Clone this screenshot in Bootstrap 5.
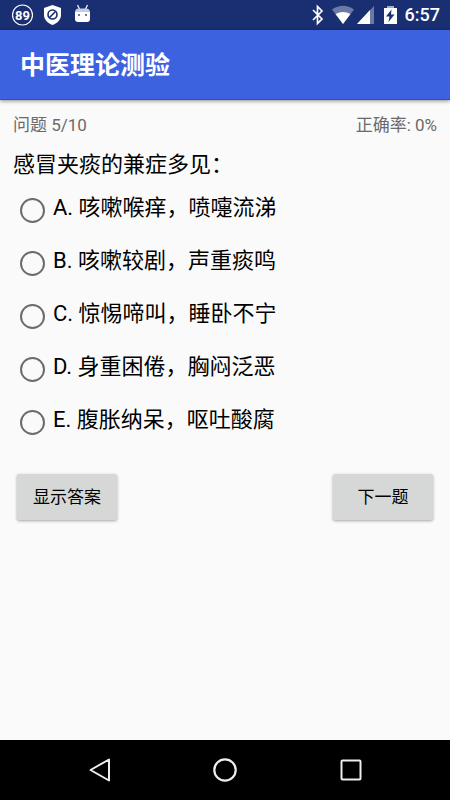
<!DOCTYPE html>
<html lang="zh-CN">
<head>
<meta charset="utf-8">
<meta name="viewport" content="width=device-width, initial-scale=1">
<title>中医理论测验</title>
<link href="https://cdn.jsdelivr.net/npm/bootstrap@5.3.0/dist/css/bootstrap.min.css" rel="stylesheet">
<style>
  body { font-family: Roboto, "Noto Sans CJK SC", sans-serif; background: #fafafa; color: #000; }
  .status-bar { height: 30px; background: #1a2e72; padding: 0 10px 0 12px; }
  .status-bar svg, .nav-keys svg { display: block; }
  .status-icons-left { gap: 10px; }
  .clock { font-size: 18px; line-height: 30px; font-weight: 500; margin-left: 8px; }
  .app-bar { height: 70px; background: #3c62e0; padding: 2px 20px 0; border-bottom: 1px solid #1e50d6; box-shadow: 0 1px 4px rgba(0,0,0,.45); }
  .app-title { font-size: 25px; line-height: 36px; font-weight: 700; }
  .quiz { padding: 12px 13px; }
  .quiz-info { font-size: 17px; line-height: 26px; color: #6a6a6a; }
  .question { font-size: 22px; line-height: 30px; margin-top: 12px; }
  .options { margin-top: 14px; padding-left: 7px; }
  .option { height: 53px; gap: 8px; }
  .option .form-check-input { width: 25px; height: 25px; margin: 4px 0 0; border: 2px solid #6c6c6c; background-color: transparent; }
  .option .form-check-input:checked { border-color: #3c62e0; background-color: #3c62e0; }
  .option-text { font-size: 22px; line-height: 28px; }
  .quiz-actions { padding: 0 4px; margin-top: 15px; }
  .btn-quiz { min-width: 100px; height: 46px; padding: 0 14px; font-size: 17px; line-height: 26px; color: #000; background: #d6d8d7; border: 0; border-radius: 2px; box-shadow: 0 1px 3px rgba(0,0,0,.35); }
  .btn-quiz:hover, .btn-quiz:active { background: #c8caca; color: #000; }
  .nav-keys { height: 60px; background: #000; padding: 0 37px; }
  .nav-key { width: 125px; height: 60px; border-radius: 0; }
</style>
<script src="https://cdn.jsdelivr.net/npm/bootstrap@5.3.0/dist/js/bootstrap.bundle.min.js"></script>
</head>
<body class="d-flex flex-column min-vh-100">
  <div class="status-bar d-flex justify-content-between align-items-center text-white">
    <div class="status-icons-left d-flex align-items-center">
      <svg width="21" height="22" viewBox="0 0 21 22" role="img" aria-label="89">
        <circle cx="10.5" cy="11" r="10" fill="none" stroke="#fff" stroke-width="1.2"/>
        <text x="10.5" y="15.5" text-anchor="middle" font-family="Roboto" font-size="13" font-weight="700" fill="#fff">89</text>
      </svg>
      <svg width="19" height="22" viewBox="0 0 19 22" aria-hidden="true">
        <path d="M9.5 1 18 4v7c0 4.500-3.500 8-8.500 10C4.500 19 1 15.500 1 11V4z" fill="#fff"/>
        <circle cx="9.500" cy="10.500" r="4.500" fill="none" stroke="#1a2e72" stroke-width="1.600"/>
        <path d="m6.500 13.500 6-6" stroke="#1a2e72" stroke-width="1.600"/>
      </svg>
      <svg width="20" height="22" viewBox="0 0 20 22" aria-hidden="true">
        <path d="m5.500 1 2 4m8-4-2 4" stroke="#fff" stroke-width="1.200"/>
        <path d="M3 8.500q0-4 4-4h7q4 0 4 4z" fill="#c5cbe0"/>
        <path d="M3 8h15v7q0 3-3 3H6q-3 0-3-3z" fill="#fff"/>
        <path d="M6 10h2v2H6zm7 0h2v2h-2z" fill="#6b78a6"/>
      </svg>
    </div>
    <div class="d-flex align-items-center">
      <svg width="86" height="30" viewBox="0 0 86 30" aria-hidden="true">
        <path d="m2 10 9 9-4.500 4.500V6.500L11 11l-9 9" fill="none" stroke="#fff" stroke-width="1.700"/>
        <path d="M21 9.500q11-7.500 22 0L32 24z" fill="#6c79a7"/>
        <path d="M24.500 14q7.500-4 15 0L32 24z" fill="#fff"/>
        <path d="M63 6v18H46z" fill="#6c79a7"/>
        <path d="M59 10v14H46z" fill="#fff"/>
        <path d="M76 6h7v3h-7z" fill="#a4adc9"/>
        <path d="M73 8h13v16H73z" fill="#fff"/>
        <path d="m80.500 9.500-5.500 7h3.500l-1 5.500 6-7.500h-3.500z" fill="#1a2e72"/>
      </svg>
      <time class="clock">6:57</time>
    </div>
  </div>

  <header class="app-bar d-flex align-items-center text-white">
    <h1 class="app-title mb-0">中医理论测验</h1>
  </header>

  <main class="quiz flex-grow-1">
    <div class="quiz-info d-flex justify-content-between">
      <span>问题 5/10</span>
      <span>正确率: 0%</span>
    </div>
    <h2 class="question fw-normal mb-0" id="question">感冒夹痰的兼症多见：</h2>

    <div class="options" role="radiogroup" aria-labelledby="question">
      <div class="option d-flex align-items-start">
        <input class="form-check-input flex-shrink-0" type="radio" name="answer" id="answerA">
        <label class="option-text" for="answerA">A. 咳嗽喉痒，喷嚏流涕</label>
      </div>
      <div class="option d-flex align-items-start">
        <input class="form-check-input flex-shrink-0" type="radio" name="answer" id="answerB">
        <label class="option-text" for="answerB">B. 咳嗽较剧，声重痰鸣</label>
      </div>
      <div class="option d-flex align-items-start">
        <input class="form-check-input flex-shrink-0" type="radio" name="answer" id="answerC">
        <label class="option-text" for="answerC">C. 惊惕啼叫，睡卧不宁</label>
      </div>
      <div class="option d-flex align-items-start">
        <input class="form-check-input flex-shrink-0" type="radio" name="answer" id="answerD">
        <label class="option-text" for="answerD">D. 身重困倦，胸闷泛恶</label>
      </div>
      <div class="option d-flex align-items-start">
        <input class="form-check-input flex-shrink-0" type="radio" name="answer" id="answerE">
        <label class="option-text" for="answerE">E. 腹胀纳呆，呕吐酸腐</label>
      </div>
    </div>

    <div class="quiz-actions d-flex justify-content-between">
      <button type="button" class="btn btn-quiz">显示答案</button>
      <button type="button" class="btn btn-quiz">下一题</button>
    </div>
  </main>

  <nav class="nav-keys d-flex justify-content-between align-items-center" aria-label="系统导航">
    <button type="button" class="btn nav-key p-0 d-flex justify-content-center align-items-center" aria-label="返回">
      <svg width="26" height="26" viewBox="0 0 26 26"><path d="M22 2.500v21L3.500 13z" fill="none" stroke="#eee" stroke-width="2" stroke-linejoin="round"/></svg>
    </button>
    <button type="button" class="btn nav-key p-0 d-flex justify-content-center align-items-center" aria-label="主页">
      <svg width="26" height="26" viewBox="0 0 26 26"><circle cx="13" cy="13" r="10.700" fill="none" stroke="#eee" stroke-width="2.200"/></svg>
    </button>
    <button type="button" class="btn nav-key p-0 d-flex justify-content-center align-items-center" aria-label="最近任务">
      <svg width="26" height="26" viewBox="0 0 26 26"><rect x="3.500" y="3.500" width="19" height="19" rx="1" fill="none" stroke="#eee" stroke-width="2"/></svg>
    </button>
  </nav>
</body>
</html>
